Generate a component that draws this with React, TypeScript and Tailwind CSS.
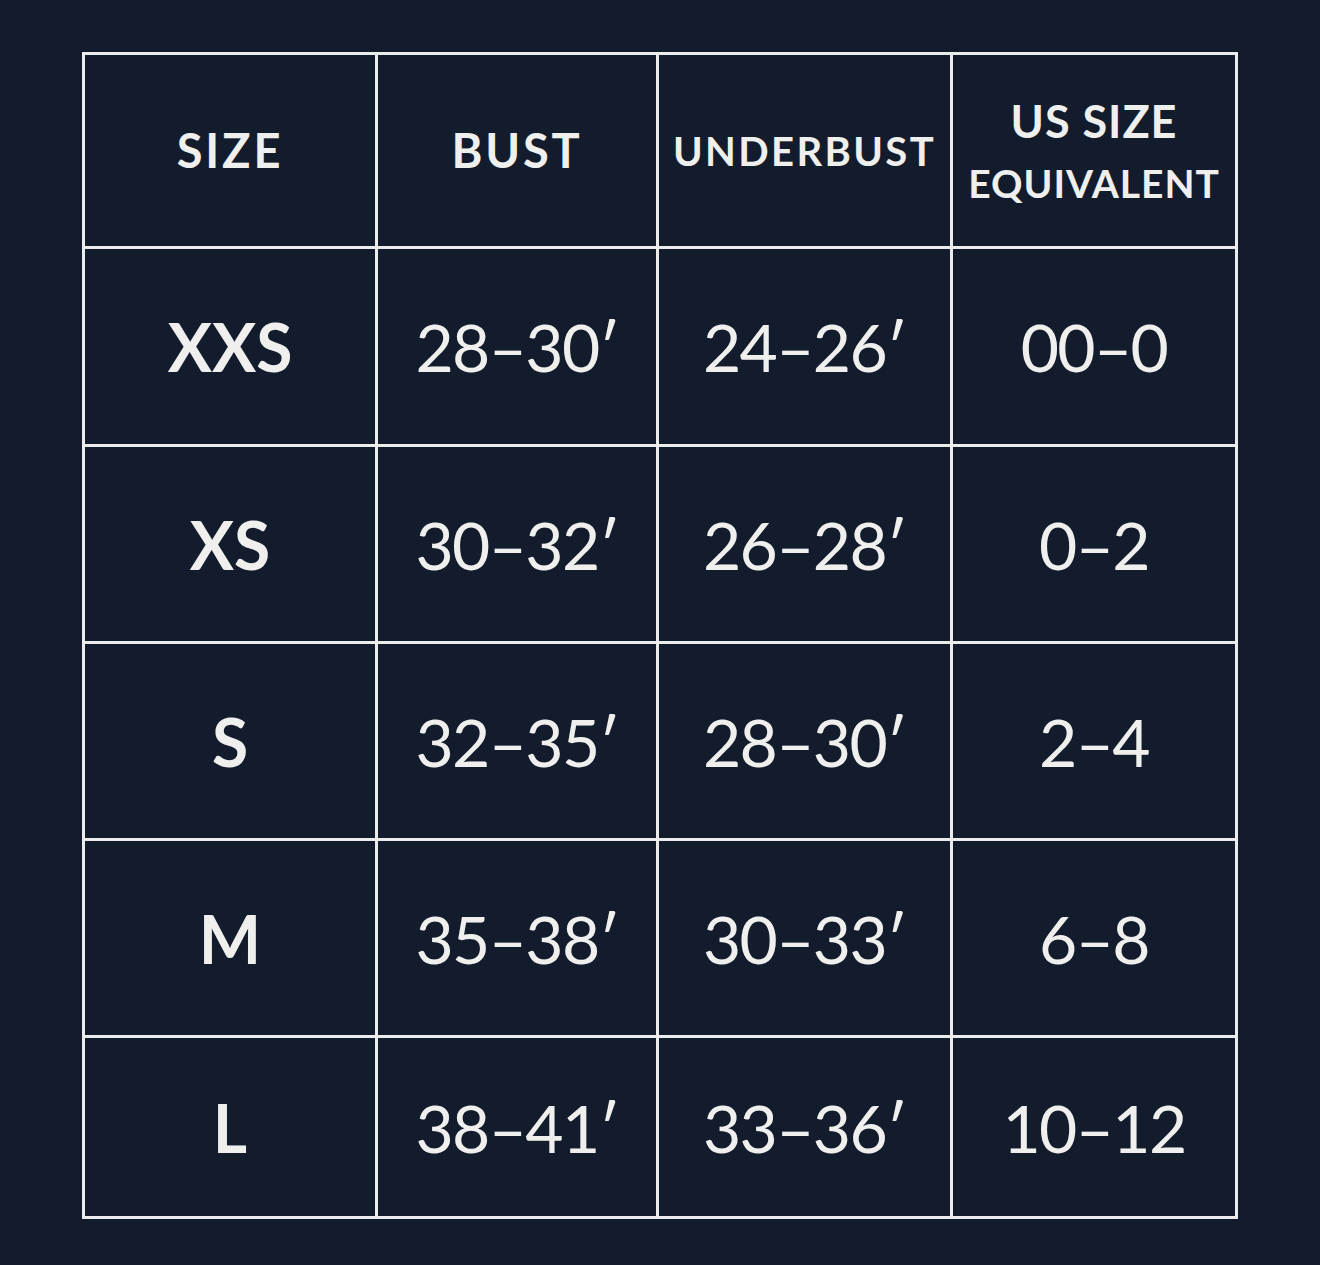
import React from "react";

const rows = [
  ["XXS", "28–30′", "24–26′", "00–0"],
  ["XS", "30–32′", "26–28′", "0–2"],
  ["S", "32–35′", "28–30′", "2–4"],
  ["M", "35–38′", "30–33′", "6–8"],
  ["L", "38–41′", "33–36′", "10–12"],
];

export default function App() {
  return (
    <div
      className="w-[1320px] h-[1265px] bg-[#131c2d] pt-[52px] pl-[82px] text-[#efefed]"
      style={{ fontFamily: "Lato, 'Noto Sans', sans-serif" }}
    >
      <div className="grid w-[1156px] grid-cols-[290px_278px_291px_282px] grid-rows-[191px_195px_194px_194px_194px_178px] gap-[3px] bg-[#ececec] p-[3px]">
        <div className="flex items-center justify-center bg-[#131c2d] text-[47px] font-bold tracking-[0.06em]">SIZE</div>
        <div className="flex items-center justify-center bg-[#131c2d] text-[47px] font-bold tracking-[0.06em]">BUST</div>
        <div className="flex items-center justify-center bg-[#131c2d] text-[40px] font-bold tracking-[0.06em]">UNDERBUST</div>
        <div className="flex flex-col items-center justify-center bg-[#131c2d] font-bold leading-none tracking-[0.06em]">
          <span className="text-[45px]">US SIZE</span>
          <span className="mt-[20px] text-[39px]">EQUIVALENT</span>
        </div>
        {rows.map((r) => (
          <React.Fragment key={r[0]}>
            <div className="flex items-center justify-center bg-[#131c2d] text-[66px] font-bold">{r[0]}</div>
            <div className="flex items-center justify-center bg-[#131c2d] text-[66px] tracking-[-0.025em]">{r[1]}</div>
            <div className="flex items-center justify-center bg-[#131c2d] text-[66px] tracking-[-0.025em]">{r[2]}</div>
            <div className="flex items-center justify-center bg-[#131c2d] text-[66px] tracking-[-0.025em]">{r[3]}</div>
          </React.Fragment>
        ))}
      </div>
    </div>
  );
}
